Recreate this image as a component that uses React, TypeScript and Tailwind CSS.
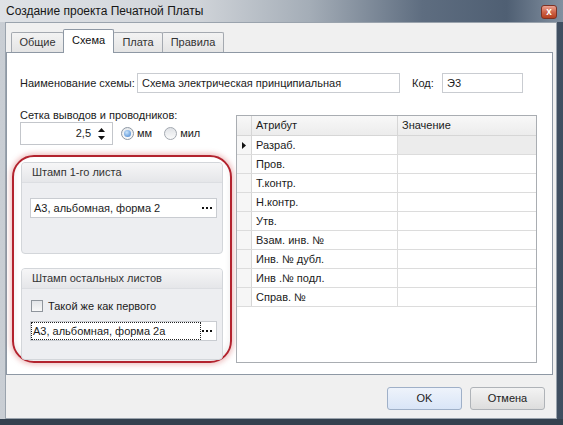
import React from "react";

const rows = [
  "Разраб.",
  "Пров.",
  "Т.контр.",
  "Н.контр.",
  "Утв.",
  "Взам. инв. №",
  "Инв. № дубл.",
  "Инв .№ подл.",
  "Справ. №",
];

function Dots() {
  return (
    <div className="flex items-center gap-[2px] mr-[4px] ml-auto">
      <span className="w-[2px] h-[2px] bg-[#111]" />
      <span className="w-[2px] h-[2px] bg-[#111]" />
      <span className="w-[2px] h-[2px] bg-[#111]" />
    </div>
  );
}

function Tab({ label, w, selected }: { label: string; w: string; selected?: boolean }) {
  if (selected) {
    return (
      <div
        className={`${w} h-[24px] -mb-px relative z-10 -ml-px bg-white border border-b-0 border-[#8e98a4] rounded-t-[2px] flex items-center justify-center text-[#111] pb-[2px]`}
      >
        {label}
      </div>
    );
  }
  return (
    <div
      className={`${w} h-[20px] -ml-px bg-[linear-gradient(#f3f3f3,#e4e4e4)] border border-b-0 border-[#a4a9b0] rounded-t-[2px] flex items-center justify-center text-[#333]`}
    >
      {label}
    </div>
  );
}

export default function App() {
  return (
    <div className="w-[563px] h-[425px] overflow-hidden flex flex-col font-['Liberation_Sans',Arial,sans-serif] text-[11px] text-[#1b1b1b] bg-[linear-gradient(to_right,#c9ced4_0%,#aeb6bf_40%,#6d7b8b_70%,#3f4e60_100%)]">
      {/* title bar */}
      <div className="h-[22px] shrink-0 flex items-center pl-[6px] pr-[6px] bg-[linear-gradient(to_right,#dfe2e6_0%,#d0d4d9_35%,#a4adb7_55%,#5e6d80_75%,#4f5f73_90%,#8290a0_100%)]">
        <span className="text-[12px] text-[#161616] leading-none">Создание проекта Печатной Платы</span>
        <div className="ml-auto w-[16px] h-[14px] mt-[1px] rounded-[3px] border border-[#7d3224] bg-[linear-gradient(#eba393,#d0654a_50%,#b5401f)] flex items-center justify-center text-white font-bold text-[10px] leading-none">
          x
        </div>
      </div>

      {/* client */}
      <div className="ml-[5px] w-[552px] h-[397px] shrink-0 border border-[#9aa3ad] bg-[#f0f0f0] flex flex-col">
        {/* tab strip */}
        <div className="h-[29px] shrink-0 flex items-end pl-[6px]">
          <Tab label="Общие" w="w-[53px]" />
          <Tab label="Схема" w="w-[51px]" selected />
          <Tab label="Плата" w="w-[50px]" />
          <Tab label="Правила" w="w-[62px]" />
        </div>

        {/* tab page */}
        <div className="w-[547px] h-[323px] shrink-0 border border-[#8e98a4] bg-white flex flex-col">
          {/* row 1 */}
          <div className="mt-[20px] flex items-center h-[20px]">
            <span className="ml-[13px] w-[117px]">Наименование схемы:</span>
            <div className="w-[263px] h-[20px] border border-[#c9ccd1] flex items-center pl-[4px]">
              Схема электрическая принципиальная
            </div>
            <span className="ml-[12px] w-[30px]">Код:</span>
            <div className="w-[81px] h-[20px] border border-[#c9ccd1] flex items-center pl-[4px]">Э3</div>
          </div>

          {/* section 2 */}
          <div className="mt-[15px] flex">
            {/* left column */}
            <div className="ml-[5px] w-[220px] flex flex-col">
              <div className="pl-[8px] h-[14px] leading-[14px]">Сетка выводов и проводников:</div>
              <div className="pl-[8px] h-[23px] flex items-center">
                <div className="w-[93px] h-[23px] border border-[#c3c6cb] flex items-center">
                  <span className="ml-auto">2,5</span>
                  <div className="w-[21px] flex flex-col items-center gap-[4px]">
                    <svg width="7" height="4" viewBox="0 0 7 4">
                      <path d="M3.5 0 L7 4 L0 4 Z" fill="#111" />
                    </svg>
                    <svg width="7" height="4" viewBox="0 0 7 4">
                      <path d="M0 0 L7 0 L3.5 4 Z" fill="#111" />
                    </svg>
                  </div>
                </div>
                <div className="ml-[8px] w-[13px] h-[13px] rounded-full border border-[#8d97a3] bg-[linear-gradient(#e6e9ec,#fafafa)] flex items-center justify-center">
                  <div className="w-[7px] h-[7px] rounded-full bg-[radial-gradient(circle_at_40%_35%,#c9e4fb,#3d7fcf)]" />
                </div>
                <span className="ml-[3px]">мм</span>
                <div className="ml-[12px] w-[13px] h-[13px] rounded-full border border-[#a2a8b0] bg-[linear-gradient(#dfe2e6,#fbfbfb)]" />
                <span className="ml-[3px]">мил</span>
              </div>

              {/* red annotation frame */}
              <div className="mt-[10px] h-[208px] border-2 border-[#b3232e] rounded-[22px] px-[7px] pt-[5px] shadow-[0_0_5px_2px_rgba(210,90,90,0.35),inset_0_-4px_6px_rgba(0,0,0,0.08)]">
                {/* group 1 */}
                <div className="h-[92px] border border-[#d3d6da] rounded-[4px] bg-[#edeef1] overflow-hidden flex flex-col">
                  <div className="h-[20px] shrink-0 bg-[linear-gradient(#f6f6f7,#e5e6e9)] border-b border-[#dcdee2] pl-[10px] flex items-center text-[#333]">
                    Штамп 1-го листа
                  </div>
                  <div className="pt-[15px] pl-[8px]">
                    <div className="w-[187px] h-[20px] border border-[#c9ccd1] bg-white flex items-center pl-[3px]">
                      <span>А3, альбомная, форма 2</span>
                      <Dots />
                    </div>
                  </div>
                </div>

                {/* group 2 */}
                <div className="mt-[14px] h-[92px] border border-[#d3d6da] rounded-[4px] bg-[#edeef1] overflow-hidden flex flex-col">
                  <div className="h-[20px] shrink-0 bg-[linear-gradient(#f6f6f7,#e5e6e9)] border-b border-[#dcdee2] pl-[10px] flex items-center text-[#333]">
                    Штамп остальных листов
                  </div>
                  <div className="pt-[11px] pl-[9px] flex items-center h-[23px]">
                    <div className="w-[12px] h-[12px] border border-[#8f959c] bg-[linear-gradient(#e3e5e8,#f8f8f8)]" />
                    <span className="ml-[5px]">Такой же как первого</span>
                  </div>
                  <div className="mt-[9px] pl-[8px]">
                    <div className="w-[187px] h-[20px] border border-[#c9ccd1] bg-white flex items-center">
                      <div className="w-[170px] h-[18px] border border-dotted border-[#222] flex items-center pl-[1px]">
                        А3, альбомная, форма 2а
                      </div>
                      <Dots />
                    </div>
                  </div>
                </div>
              </div>
            </div>

            {/* grid */}
            <div className="ml-[4px] mt-[7px] w-[301px] h-[248px] border border-[#a9adb2] flex flex-col">
              <div className="h-[20px] shrink-0 flex border-b border-[#d6d6d6] bg-[linear-gradient(#f8f8f8,#ececec)]">
                <div className="w-[15px] border-r border-[#d6d6d6]" />
                <div className="w-[146px] border-r border-[#d6d6d6] pl-[4px] flex items-center">Атрибут</div>
                <div className="flex-1 pl-[4px] flex items-center">Значение</div>
              </div>
              {rows.map((r, i) => (
                <div key={r} className="h-[19px] shrink-0 flex border-b border-[#dcdcdc]">
                  <div className="w-[15px] border-r border-[#d6d6d6] bg-[#f6f6f6] flex items-center justify-center">
                    {i === 0 && (
                      <svg width="4" height="7" viewBox="0 0 4 7">
                        <path d="M0 0 L4 3.5 L0 7 Z" fill="#111" />
                      </svg>
                    )}
                  </div>
                  <div className="w-[146px] border-r border-[#dcdcdc] pl-[4px] flex items-center">{r}</div>
                  <div className={`flex-1 ${i === 0 ? "bg-[#ececec]" : ""}`} />
                </div>
              ))}
            </div>
          </div>
        </div>

        {/* buttons */}
        <div className="flex justify-end gap-[8px] pt-[12px] pr-[11px]">
          <div className="w-[75px] h-[23px] rounded-[3px] border border-[#9fb0c8] bg-[linear-gradient(#eef3fb,#d9e5f7)] flex items-center justify-center text-[#222]">
            OK
          </div>
          <div className="w-[75px] h-[23px] rounded-[3px] border border-[#afb3b8] bg-[linear-gradient(#f3f3f3,#dddddd)] flex items-center justify-center text-[#222]">
            Отмена
          </div>
        </div>
      </div>
      <div className="flex-1 bg-[#34414f]" />
    </div>
  );
}
